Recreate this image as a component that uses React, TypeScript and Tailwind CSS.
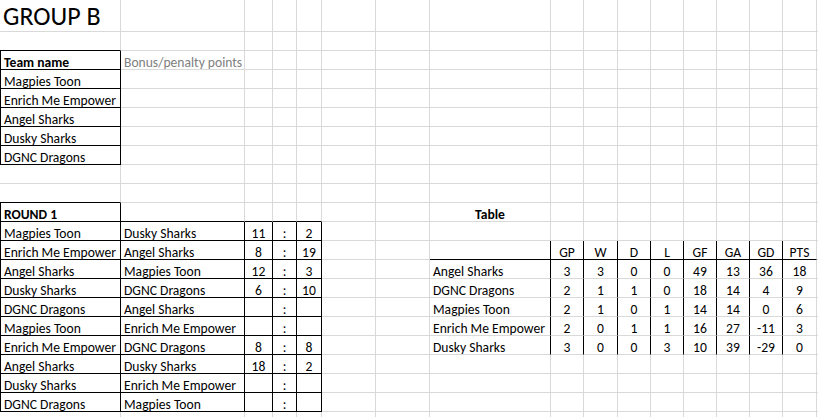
import React from "react";

const colCount = 17;
const rowCount = 22;

type Cell = {
  text?: string;
  bold?: boolean;
  grey?: boolean;
  title?: boolean;
  align?: "left" | "center";
};

const teams = ["Magpies Toon", "Enrich Me Empower", "Angel Sharks", "Dusky Sharks", "DGNC Dragons"];

const matches: [string, string, string, string][] = [
  ["Magpies Toon", "Dusky Sharks", "11", "2"],
  ["Enrich Me Empower", "Angel Sharks", "8", "19"],
  ["Angel Sharks", "Magpies Toon", "12", "3"],
  ["Dusky Sharks", "DGNC Dragons", "6", "10"],
  ["DGNC Dragons", "Angel Sharks", "", ""],
  ["Magpies Toon", "Enrich Me Empower", "", ""],
  ["Enrich Me Empower", "DGNC Dragons", "8", "8"],
  ["Angel Sharks", "Dusky Sharks", "18", "2"],
  ["Dusky Sharks", "Enrich Me Empower", "", ""],
  ["DGNC Dragons", "Magpies Toon", "", ""],
];

const standings: (string | number)[][] = [
  ["Angel Sharks", 3, 3, 0, 0, 49, 13, 36, 18],
  ["DGNC Dragons", 2, 1, 1, 0, 18, 14, 4, 9],
  ["Magpies Toon", 2, 1, 0, 1, 14, 14, 0, 6],
  ["Enrich Me Empower", 2, 0, 1, 1, 16, 27, -11, 3],
  ["Dusky Sharks", 3, 0, 0, 3, 10, 39, -29, 0],
];

function buildSheet(): Cell[][] {
  const sheet: Cell[][] = Array.from({ length: rowCount }, () =>
    Array.from({ length: colCount }, () => ({}))
  );
  sheet[0][0] = { text: "GROUP B", title: true };
  sheet[2][0] = { text: "Team name", bold: true };
  sheet[2][1] = { text: "Bonus/penalty points", grey: true };
  teams.forEach((t, i) => (sheet[3 + i][0] = { text: t }));

  sheet[10][0] = { text: "ROUND 1", bold: true };
  matches.forEach(([home, away, hs, as], i) => {
    const r = 11 + i;
    sheet[r][0] = { text: home };
    sheet[r][1] = { text: away };
    sheet[r][2] = { text: hs, align: "center" };
    sheet[r][3] = { text: ":", align: "center" };
    sheet[r][4] = { text: as, align: "center" };
  });

  sheet[10][7] = { text: "Table", bold: true, align: "center" };
  ["GP", "W", "D", "L", "GF", "GA", "GD", "PTS"].forEach((h, i) => {
    sheet[12][8 + i] = { text: h, align: "center" };
  });
  standings.forEach((row, i) => {
    row.forEach((v, j) => {
      sheet[13 + i][7 + j] = { text: String(v), align: j === 0 ? "left" : "center" };
    });
  });
  return sheet;
}

const inRange = (v: number, a: number, b: number) => v >= a && v <= b;

// black borders drawn on the bottom / right edge of a cell
function bottomBlack(r: number, c: number) {
  if (c === 0 && (inRange(r, 1, 7) || inRange(r, 9, 20))) return true;
  if (inRange(c, 1, 4) && inRange(r, 10, 20)) return true;
  if (inRange(c, 7, 15) && r === 12) return true;
  return false;
}

function rightBlack(r: number, c: number) {
  if (c === 0 && (inRange(r, 2, 7) || inRange(r, 10, 20))) return true;
  if (inRange(c, 1, 4) && inRange(r, 11, 20)) return true;
  if (inRange(c, 7, 14) && inRange(r, 12, 17)) return true;
  return false;
}

function leftBlack(r: number, c: number) {
  return c === 0 && (inRange(r, 2, 7) || inRange(r, 10, 20));
}

export default function App() {
  const sheet = buildSheet();

  return (
    <div className="h-[417px] w-[818px] overflow-hidden bg-white font-['Carlito','Lato',sans-serif] text-[13.6px] text-black">
      <div className="grid grid-cols-[121px_124px_28px_24px_25px_54px_54px_121px_33px_34px_33px_33px_33px_33px_33px_34px_1px] grid-rows-[32px_repeat(21,19px)]">
        {sheet.flatMap((row, r) =>
          row.map((cell, c) => (
            <div
              key={`${r}-${c}`}
              className={`flex items-end overflow-visible whitespace-nowrap border-b border-r ${
                cell.title ? "pb-[2px] text-[26px] leading-[26px]" : "leading-[12px]"
              } ${bottomBlack(r, c) ? "border-b-black" : "border-b-[#d9d9d9]"} ${
                rightBlack(r, c) ? "border-r-black" : "border-r-[#d9d9d9]"
              } ${leftBlack(r, c) ? "border-l border-l-black" : ""} ${
                cell.align === "center" ? "justify-center" : "pl-[3px]"
              } ${cell.bold ? "font-bold" : ""} ${cell.grey ? "text-[#808080]" : ""}`}
            >
              {cell.text}
            </div>
          ))
        )}
      </div>
    </div>
  );
}
